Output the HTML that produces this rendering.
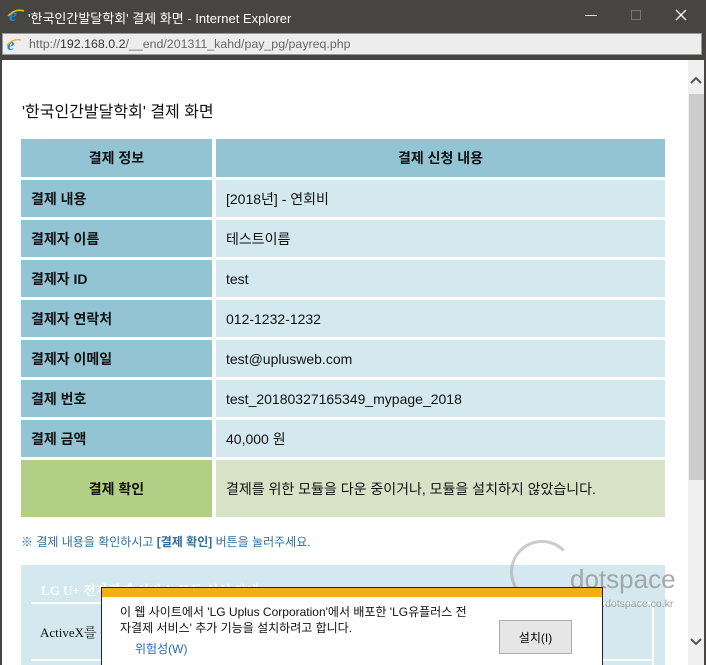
<!DOCTYPE html>
<html><head><meta charset="utf-8"><style>
*{margin:0;padding:0;box-sizing:border-box}
body{width:706px;height:665px;overflow:hidden;background:#474542;font-family:"Liberation Sans","Noto Sans CJK KR",sans-serif;position:relative}
.abs{position:absolute}
.title{left:28px;top:8px;color:#fff;font-size:13px}
.addr{left:2px;top:33px;width:700px;height:22px;background:#ededed;border:1px solid #999}
.addr span{position:absolute;left:26px;top:3px;font-size:12.4px;color:#666}
.content{left:2px;top:60px;width:702px;height:605px;background:#fff;overflow:hidden}
.cell{position:absolute;font-size:14px;display:flex;align-items:center}
.l{left:19px;width:191px;background:#92c4d3;font-weight:bold;padding-left:10px;color:#111}
.r{left:214px;width:449px;background:#d4e8ef;padding-left:10px;color:#111}
h1{position:absolute;left:20px;top:38px;font-size:16px;font-weight:normal;color:#111}
</style></head><body>
<svg class="abs" style="left:7px;top:6px" width="18" height="18" viewBox="0 0 18 18"><text x="2" y="15" font-size="18" font-style="italic" font-family="Liberation Serif" fill="#1e88d8" font-weight="bold">e</text><path d="M1 10 Q9 2 17 5" stroke="#f0b020" stroke-width="1.5" fill="none"/></svg>
<div class="abs title">'한국인간발달학회' 결제 화면 - Internet Explorer</div>
<div class="abs" style="left:585px;top:15px;width:12px;height:1px;background:#ddd"></div>
<div class="abs" style="left:631px;top:10px;width:10px;height:10px;border:1px solid #777"></div>
<svg class="abs" style="left:675px;top:9px" width="12" height="12"><path d="M1 1L11 11M11 1L1 11" stroke="#fff" stroke-width="1.3"/></svg>
<div class="abs addr"><svg class="abs" style="left:3px;top:2px" width="16" height="16"><text x="1" y="14" font-size="17" font-style="italic" font-family="Liberation Serif" fill="#1e88d8" font-weight="bold">e</text><path d="M1 9 Q8 2 15 4" stroke="#f0b020" stroke-width="1.4" fill="none"/></svg><span>http://<b style="color:#333;font-weight:normal">192.168.0.2</b>/__end/201311_kahd/pay_pg/payreq.php</span></div>
<div class="abs content">
<h1>'한국인간발달학회' 결제 화면</h1>
<div class="cell l" style="top:79px;height:38px;justify-content:center;padding:0">결제 정보</div>
<div class="cell r" style="top:79px;height:38px;background:#92c4d3;font-weight:bold;justify-content:center;padding:0">결제 신청 내용</div>
<div class="cell l" style="top:120px;height:37px">결제 내용</div><div class="cell r" style="top:120px;height:37px">[2018년] - 연회비</div>
<div class="cell l" style="top:160px;height:37px">결제자 이름</div><div class="cell r" style="top:160px;height:37px">테스트이름</div>
<div class="cell l" style="top:200px;height:37px">결제자 ID</div><div class="cell r" style="top:200px;height:37px">test</div>
<div class="cell l" style="top:240px;height:37px">결제자 연락처</div><div class="cell r" style="top:240px;height:37px">012-1232-1232</div>
<div class="cell l" style="top:280px;height:37px">결제자 이메일</div><div class="cell r" style="top:280px;height:37px">test@uplusweb.com</div>
<div class="cell l" style="top:320px;height:37px">결제 번호</div><div class="cell r" style="top:320px;height:37px">test_20180327165349_mypage_2018</div>
<div class="cell l" style="top:360px;height:37px">결제 금액</div><div class="cell r" style="top:360px;height:37px">40,000 원</div>
<div class="cell l" style="top:400px;height:57px;background:#b3cf83;justify-content:center;padding:0">결제 확인</div>
<div class="cell r" style="top:400px;height:57px;background:#d7e2c6">결제를 위한 모듈을 다운 중이거나, 모듈을 설치하지 않았습니다.</div>
<div class="abs" style="left:19px;top:473px;font-size:12px;color:#2f6f9f">※ 결제 내용을 확인하시고 <b>[결제 확인]</b> 버튼을 눌러주세요.</div>
<div class="abs" style="left:19px;top:505px;width:644px;height:110px;background:#d4e8ef"></div>
<div class="abs" style="left:39px;top:520px;color:#fff;font-family:'Liberation Serif','Noto Serif CJK SC',serif;font-size:13px;font-weight:bold">LG U+ 전자결제 서비스 모듈 설치 안내</div>
<div class="abs" style="left:29px;top:542px;width:622px;height:2px;background:#fff"></div>
<div class="abs" style="left:38px;top:562px;font-family:'Liberation Serif','Noto Serif CJK SC',serif;font-size:13px;color:#111">ActiveX를 설치해 주세요</div>
<div class="abs" style="left:650px;top:542px;width:2px;height:70px;background:#fff"></div>
<div class="abs" style="left:29px;top:599px;width:622px;height:2px;background:#fff"></div>
<div class="abs" style="left:508px;top:480px;width:64px;height:64px;border-radius:50%;border:3px solid rgba(160,160,160,.55);border-right-color:transparent"></div>
<div class="abs" style="left:568px;top:504px;font-size:26px;color:rgba(150,150,150,.8)">dotspace</div>
<div class="abs" style="left:578px;top:538px;font-size:10.5px;color:rgba(140,140,140,.85)">www.dotspace.co.kr</div>
</div>
<div class="abs" style="left:688px;top:60px;width:16px;height:605px;background:#f0f0f0"></div>
<div class="abs" style="left:689px;top:94px;width:15px;height:386px;background:#cdcdcd"></div>
<svg class="abs" style="left:690px;top:76px" width="12" height="8"><path d="M1 7L6 2L11 7" stroke="#555" stroke-width="2" fill="none"/></svg>
<svg class="abs" style="left:690px;top:638px" width="12" height="8"><path d="M1 1L6 6L11 1" stroke="#555" stroke-width="2" fill="none"/></svg>
<div class="abs" style="left:101px;top:587px;width:502px;height:78px;background:#fff;border:1px solid #222;border-bottom:none">
<div style="height:9px;background:#efb10f;margin:0"></div>
<div class="abs" style="left:18px;top:16px;font-size:12px;color:#111;line-height:16px">이 웹 사이트에서 'LG Uplus Corporation'에서 배포한 'LG유플러스 전<br>자결제 서비스' 추가 기능을 설치하려고 합니다.</div>
<div class="abs" style="left:33px;top:52px;font-size:12px;color:#2a6bb0">위험성(W)</div>
<div class="abs" style="left:397px;top:32px;width:73px;height:34px;background:#e6e6e6;border:1px solid #adadad;font-size:12px;display:flex;align-items:center;justify-content:center">설치(I)</div>
</div>
<div class="abs" style="left:0;top:60px;width:2px;height:605px;background:#474542"></div>
</body></html>
